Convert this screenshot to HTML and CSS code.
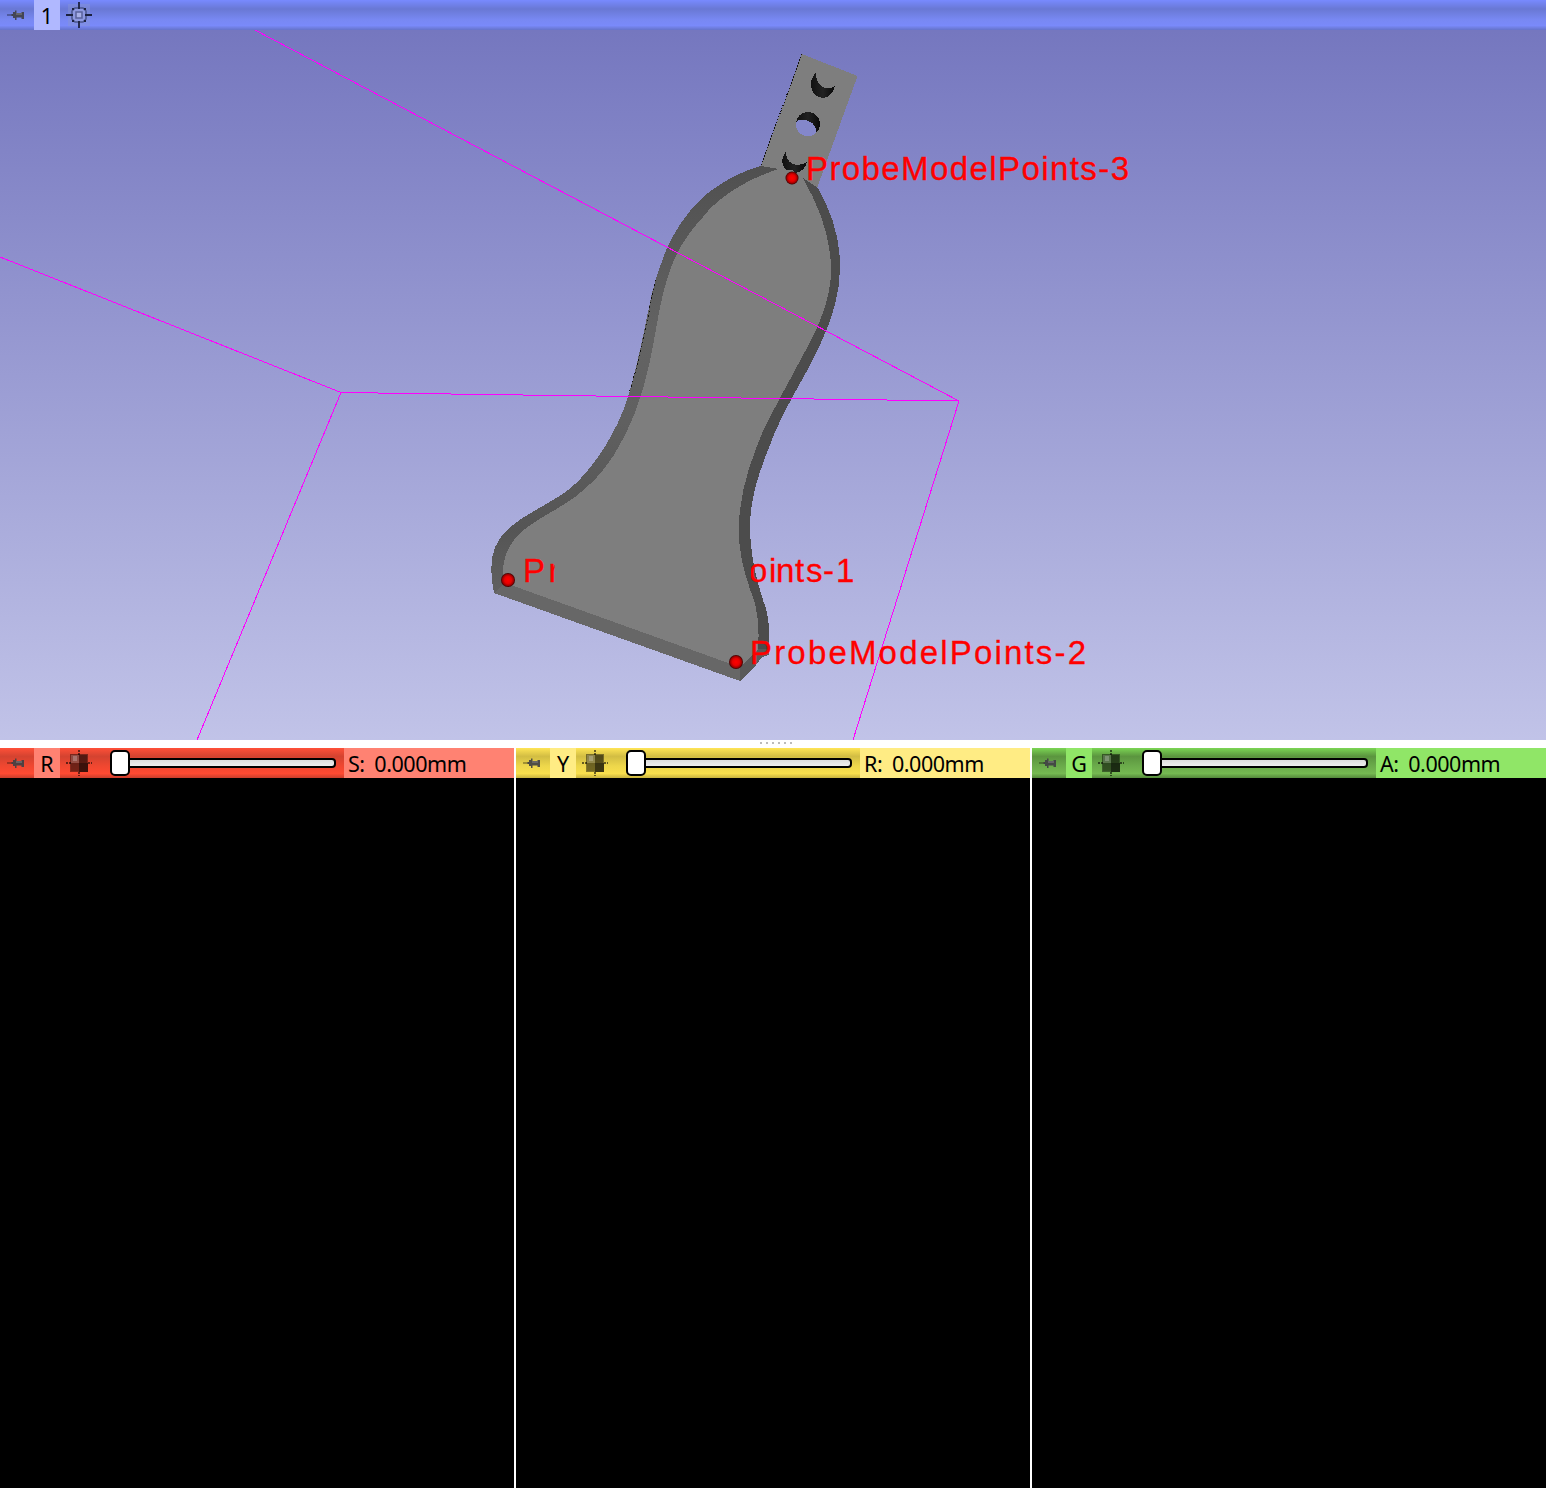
FILE: index.html
```html
<!DOCTYPE html>
<html lang="en">
<head>
<meta charset="utf-8">
<title>Probe views</title>
<link rel="stylesheet" href="styles.css">
</head>
<body>
<svg class="defs" width="0" height="0">
  <defs>
    <symbol id="pin" viewBox="0 0 20 12">
      <path d="M0 6h6" stroke="#000" stroke-opacity=".4" stroke-width="1.500"/>
      <path d="M4.500 5H6V3h2V1.500h1.500V4h5V3H17v7h-2.500V8.500h-5V11H8V9H6V7H4.500z" fill="#3f3f44" opacity=".9"/>
      <path d="M9 5h6" stroke="#7a7a7a" stroke-width="1.200"/>
    </symbol>
    <symbol id="fit" viewBox="0 0 26 26">
      <path d="M13 0v2M13 3v2M13 22v2M13 25v1M0 13h2M3 13h2M22 13h2M25 13h1" stroke="#000" stroke-opacity=".75" stroke-width="1.500"/>
      <rect x="4" y="4" width="18" height="18" opacity=".45"/>
      <path d="M5 5h8v8H5z" fill="#fff" opacity=".18"/>
      <path d="M13 5h8v8h-8z" opacity=".3"/>
      <path d="M13 13h9v9h-9z" opacity=".55"/>
      <path d="M5 13h8v8H5z" opacity=".15"/>
      <path d="M7 6h4v5H7z" fill="#fff" opacity=".22"/>
    </symbol>
  </defs>
</svg>
<div class="app">
  <header class="bar blue">
    <span class="pin"><svg width="20" height="12"><use href="#pin"/></svg></span>
    <span class="name">1</span>
    <svg class="center" width="26" height="26" viewBox="0 0 26 26">
      <rect x="2" y="2" width="22" height="22" fill="#8794d2" opacity=".45"/>
      <path d="M9 6h8l3 3v8l-3 3H9l-3-3V9z" fill="#8d98e0" stroke="#4a558f" stroke-width="1.500"/>
      <path d="M13 0v7M13 19v7M0 13h7M19 13h7" stroke="#1c2240" stroke-width="1.800"/>
      <path d="M6 6h2v2H6zM18 6h2v2h-2zM6 18h2v2H6zM18 18h2v2h-2z" fill="#1c2240"/>
      <rect x="10" y="10" width="6" height="6" fill="#a8b0e8" stroke="#59639c" stroke-width="1.500"/>
    </svg>
  </header>
  <main class="scene">
    <svg width="1546" height="710" viewBox="0 30 1546 710">
      <defs>
        <radialGradient id="ball"><stop offset="0" stop-color="#f00"/><stop offset=".5" stop-color="#e80000"/><stop offset=".8" stop-color="#a00000"/><stop offset="1" stop-color="#300000"/></radialGradient>
        <linearGradient id="hole"><stop offset="0" stop-color="#111"/><stop offset=".5" stop-color="#222"/><stop offset="1" stop-color="#080808"/></linearGradient>
        <linearGradient id="rimLeft" x1="0" y1="166" x2="0" y2="593" gradientUnits="userSpaceOnUse"><stop offset="0" stop-color="#505050"/><stop offset=".4" stop-color="#636363"/><stop offset=".6" stop-color="#606060"/><stop offset=".85" stop-color="#555"/><stop offset="1" stop-color="#606060"/></linearGradient>
        <clipPath id="visible"><path d="M520 545h26.500v45H520zM550 545h4.500v45h-4.500zM751 545h120v45H751z"/></clipPath>
      </defs>
      <g shape-rendering="crispEdges">
        <path d="M802 54L857.500 76L817 188L761 166z" fill="#7e7e7e"/>
        <path d="M802 54L761 165" stroke="#111" stroke-dasharray="1.5 1.5"/>
        <path d="M816 72C806 83 812 98 824 98C830 97 834 91 835 86C828 91 815 88 816 72z" fill="url(#hole)"/>
        <circle cx="808" cy="124" r="12" fill="url(#hole)"/>
        <path d="M796 122C802 116 818 122 816 133A12 12 0 0 1 796 122z" fill="#8487ca"/>
        <path d="M786 151C778 162 784 173 795 173C802 172 806 167 807 162C798 168 785 165 786 151z" fill="url(#hole)"/>
        <path class="rim-left" d="M779 169L761 166C744 170 716 184 699 201C686 214 674 232 667 248C661 262 656 278 652 293C645 325 638 365 628 397C618 430 595 466 573 486C555 502 523 514 506 531C492 545 488 563 494 593L520 593L670 400L780 178z"/>
        <path d="M803 178L818 188C845 236 849 285 820 345C805 378 783 408 768 450C752 490 748 515 751 545C753 568 758 583 763 600C770 616 770 637 769 655L762 657L756 665L740 681L720 650L720 450z" fill="#4c4c4c"/>
        <path d="M494 593L505 583L731 663L740 667V681z" fill="#676767"/>
        <path d="M740 681V667L758 649L769 649V655L762 657L756 665z" fill="#5a5a5a"/>
        <path d="M779 169C749 178 718 197 703 217C690 231 679 247 672 265C659 298 656 336 649 365C642 397 631 428 614 455C601 475 589 486 575 497C555 511 539 518 525 529C511 540 500 558 504 579L508 584L731 664L740 667L758 650C759 635 759 620 755 603C748 584 741 565 739 540C737 501 748 467 763 431C773 410 790 380 802 357C822 322 831 295 831 270C831 236 819 207 803 178L792 170z" fill="#7e7e7e"/>
        <path d="M656 280Q652 293 648.500 315Q641 354 629.500 392" fill="none" stroke="#111" stroke-dasharray="1.500 3"/>
        <path class="roi" d="M255 30L959 401L853 740M0 257L341 392.500L197 740M341 392.500L959 401"/>
      </g>
      <circle cx="792" cy="178" r="6.500" fill="url(#ball)"/>
      <circle cx="508" cy="580" r="7" fill="url(#ball)"/>
      <circle cx="736" cy="662" r="7" fill="url(#ball)"/>
      <g class="labels">
        <text x="806" y="180" textLength="323">ProbeModelPoints-3</text>
        <text x="523 548.500 562 584 605 628 656 677 698 718 725 749 769 776 795 806 823 836" y="582" clip-path="url(#visible)">ProbeModelPoints-1</text>
        <text x="750" y="664" textLength="336">ProbeModelPoints-2</text>
      </g>
    </svg>
  </main>
  <div class="splitter"><i></i><i></i><i></i><i></i><i></i><i></i></div>
  <section class="views">
    <article class="view">
      <div class="bar red">
        <span class="pin"><svg width="20" height="12"><use href="#pin"/></svg></span><span class="name">R</span>
        <svg class="center" width="26" height="26"><use href="#fit"/></svg>
        <div class="slider"><b></b></div><span class="value">S: 0.000mm</span>
      </div><div class="slice"></div>
    </article>
    <article class="view">
      <div class="bar yellow">
        <span class="pin"><svg width="20" height="12"><use href="#pin"/></svg></span><span class="name">Y</span>
        <svg class="center" width="26" height="26"><use href="#fit"/></svg>
        <div class="slider"><b></b></div><span class="value">R: 0.000mm</span>
      </div><div class="slice"></div>
    </article>
    <article class="view">
      <div class="bar green">
        <span class="pin"><svg width="20" height="12"><use href="#pin"/></svg></span><span class="name">G</span>
        <svg class="center" width="26" height="26"><use href="#fit"/></svg>
        <div class="slider"><b></b></div><span class="value">A: 0.000mm</span>
      </div><div class="slice"></div>
    </article>
  </section>
</div>
</body>
</html>
```
FILE: styles.css
```css
* { box-sizing: border-box; }
body { margin: 0; background: #fff; font-family: "Noto Sans", sans-serif; font-size: 21.5px; color: #000; }
.defs { display: block; }
.app { display: flex; flex-direction: column; height: 1488px; width: 1546px; overflow: hidden; }
.bar { display: flex; align-items: center; height: 30px; flex: none; }
.blue { --light: #b0b8ff; background: linear-gradient(#788aff, #6978d4 30%, #7888f2 65%, #7a8afa 85%, #6573c9); }
.red { --light: #ff8272; background: linear-gradient(#ff5038, #d44330 28%, #f04730 60%, #ff4a32 85%, #c93d2b); }
.yellow { --light: #ffec84; background: linear-gradient(#ffe555, #d2bd43 28%, #eed74b 60%, #f9df4d 85%, #c8b33e); }
.green { --light: #90e667; background: linear-gradient(#7bd554, #5b953f 28%, #6bab4b 60%, #75b951 85%, #54883b); }
.pin { width: 34px; height: 12px; padding-left: 7px; }
.pin svg, .center, .scene svg { display: block; }
.name { width: 26px; height: 30px; line-height: 32px; text-align: center; background: var(--light); }
.center { margin-left: 6px; flex: none; }
.slider { width: 226px; height: 10px; margin: 0 8px 0 18px; border: 2px solid #000; border-radius: 4px; background: linear-gradient(#ddd, #eee); display: flex; align-items: center; flex: none; }
.slider b { width: 20px; height: 26px; margin-left: -2px; background: #fff; border: 2px solid #000; border-radius: 5px; flex: none; }
.value { flex: 1; height: 30px; padding-left: 4px; line-height: 32px; background: var(--light); white-space: nowrap; letter-spacing: -.45px; word-spacing: 4.5px; }
.scene { height: 710px; flex: none; background: linear-gradient(#7577bf, #c1c3e8); }
.rim-left { fill: url(#rimLeft); }
.roi { fill: none; stroke: #f0f; stroke-width: 1; }
.labels { font: 33px "Liberation Sans", sans-serif; fill: #f00; stroke: #f00; stroke-width: .3; }
.splitter { height: 8px; flex: none; display: flex; justify-content: center; gap: 4px; padding: 2px 0 0 6px; }
.splitter i { width: 2px; height: 2px; background: #bbb; }
.views { display: grid; grid-template-columns: 514px 514px 514px; gap: 2px; flex: 1; }
.view { display: flex; flex-direction: column; }
.slice { flex: 1; background: #000; }
```
